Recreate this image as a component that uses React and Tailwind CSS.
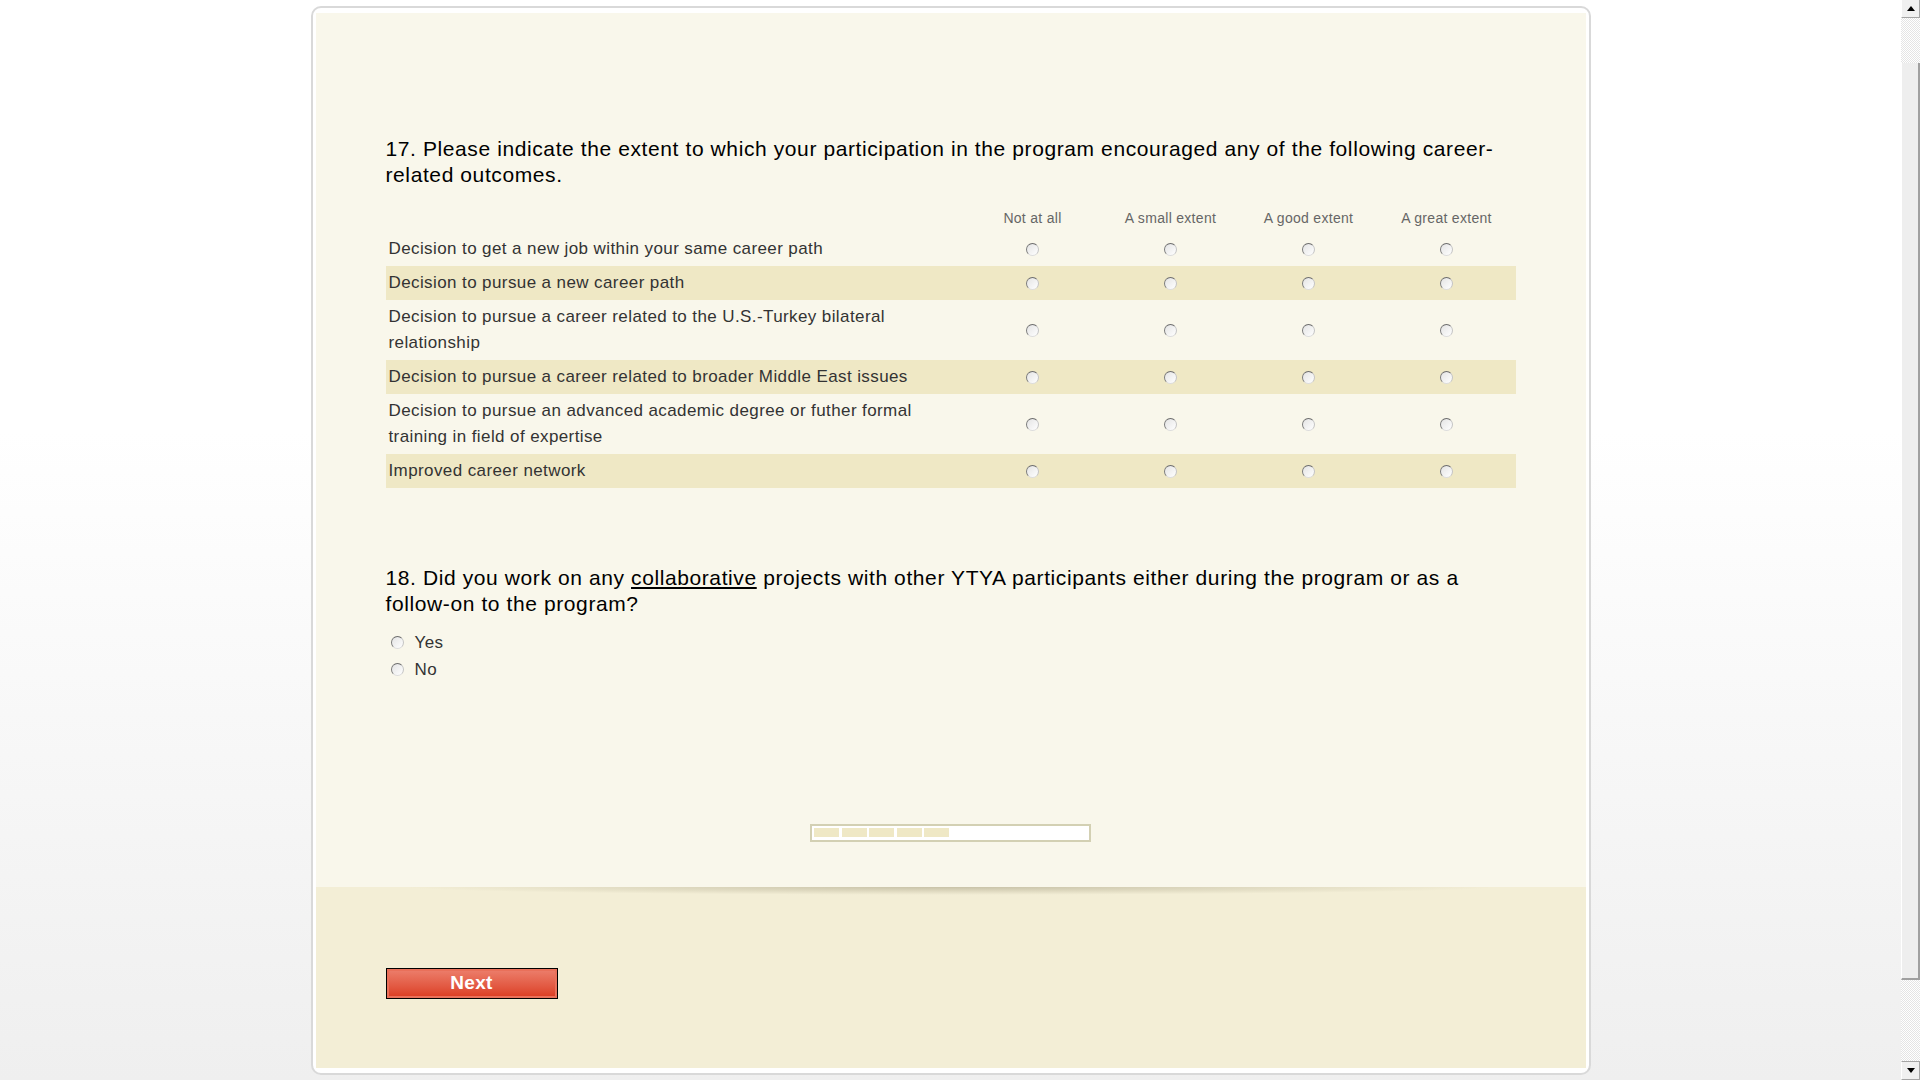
import React from "react";

// Survey page: question 17 (matrix) and 18 (yes/no), progress bar, Next button.
const SCALE = ["Not at all", "A small extent", "A good extent", "A great extent"];

const OUTCOMES = [
  "Decision to get a new job within your same career path",
  "Decision to pursue a new career path",
  "Decision to pursue a career related to the U.S.-Turkey bilateral relationship",
  "Decision to pursue a career related to broader Middle East issues",
  "Decision to pursue an advanced academic degree or futher formal training in field of expertise",
  "Improved career network",
];

function Radio() {
  // old-school inset radio: dark top/left arc, light bottom/right
  return (
    <span className="inline-block h-[13px] w-[13px] rounded-full border border-t-[#6c6c6c] border-l-[#7a7a7a] border-r-[#c4c4c4] border-b-[#dcdcdc] bg-gradient-to-br from-[#e4e4e4] to-white align-middle" />
  );
}

function Scrollbar() {
  return (
    <div className="flex h-full w-[19px] shrink-0 flex-col bg-[repeating-conic-gradient(#e4e4e4_0_25%,#ffffff_0_50%)] bg-[length:2px_2px]">
      <div className="flex h-[18px] items-center justify-center border-b border-r border-[#a5a5a5] border-l border-l-white bg-[#f0f0f0]">
        <svg width="8" height="5" viewBox="0 0 8 5">
          <path d="M0 5 L4 0 L8 5 Z" fill="#000" />
        </svg>
      </div>
      <div className="h-[45px]" />
      <div className="h-[917px] border-l border-l-white border-r-2 border-b-2 border-[#a0a0a0] bg-[#eeeeee]" />
      <div className="flex-1" />
      <div className="flex h-[19px] items-center justify-center border-t border-r border-b border-[#a5a5a5] border-l border-l-white bg-[#f0f0f0]">
        <svg width="8" height="5" viewBox="0 0 8 5">
          <path d="M0 0 L8 0 L4 5 Z" fill="#000" />
        </svg>
      </div>
    </div>
  );
}

export default function App() {
  return (
    <div className="flex h-screen w-full overflow-hidden bg-gradient-to-b from-white from-40% to-[#efefef] font-['Liberation_Sans',Arial,sans-serif]">
      <div className="flex flex-1 justify-center pt-[6px]">
        <div className="flex h-[1069px] w-[1280px] flex-col rounded-[10px] border-2 border-[#d9d9d9] bg-white px-[3px] pt-[5px] pb-[5px]">
          <div className="flex h-[874px] flex-col bg-[#f9f7eb] px-[70px] pt-[123px]">
            <h2 className="text-[21px] leading-[26px] tracking-[0.6px] text-black">
              17. Please indicate the extent to which your participation in the program encouraged any of the following career-related outcomes.
            </h2>

            <table className="mt-[16px] w-[1130px] table-fixed border-collapse">
              <colgroup>
                <col className="w-[578px]" />
                <col className="w-[138px]" />
                <col className="w-[138px]" />
                <col className="w-[138px]" />
                <col className="w-[138px]" />
              </colgroup>
              <thead>
                <tr className="h-[28px]">
                  <th />
                  {SCALE.map((s) => (
                    <th key={s} className="text-center text-[14px] font-normal tracking-[0.3px] text-[#666]">
                      {s}
                    </th>
                  ))}
                </tr>
              </thead>
              <tbody>
                {OUTCOMES.map((label, i) => (
                  <tr key={label} className={i % 2 === 1 ? "bg-[#efe8c5]" : ""}>
                    <td className="py-[4px] pl-[3px] text-[17px] leading-[26px] tracking-[0.4px] text-[#333]">{label}</td>
                    {SCALE.map((s) => (
                      <td key={s} className="text-center">
                        <Radio />
                      </td>
                    ))}
                  </tr>
                ))}
              </tbody>
            </table>

            <h2 className="mt-[77px] text-[21px] leading-[26px] tracking-[0.6px] text-black">
              18. Did you work on any <span className="underline">collaborative</span> projects with other YTYA participants either during the program or as a follow-on to the program?
            </h2>
            <div className="mt-[12px] flex flex-col">
              {["Yes", "No"].map((o) => (
                <label key={o} className="flex h-[27px] items-center gap-[11px] pl-[5px] text-[17px] tracking-[0.4px] text-[#333]">
                  <Radio />
                  {o}
                </label>
              ))}
            </div>

            <div className="mx-auto mt-[141px] flex h-[18px] w-[281px] gap-[2.5px] border-2 border-[#d3d0b3] bg-white px-[2px] pt-[2px] pb-[3px]">
              {[0, 1, 2, 3, 4].map((n) => (
                <div key={n} className="h-full w-[25px] bg-[#efe8c5]" />
              ))}
            </div>
          </div>

          <div className="h-[181px] bg-[#f3eed6] px-[70px]">
            <div className="mx-auto h-[8px] w-[1100px] bg-[radial-gradient(ellipse_at_top,rgba(120,112,80,0.35),transparent_70%)]" />
            <button className="mt-[73px] h-[31px] w-[172px] border border-black p-0">
              <span className="flex h-full w-full items-center justify-center border-2 border-[#e9705a] bg-gradient-to-b from-[#eb7b68] to-[#dc3f25] text-[19px] font-bold tracking-[0.3px] text-white">
                Next
              </span>
            </button>
          </div>
        </div>
      </div>
      <Scrollbar />
    </div>
  );
}
